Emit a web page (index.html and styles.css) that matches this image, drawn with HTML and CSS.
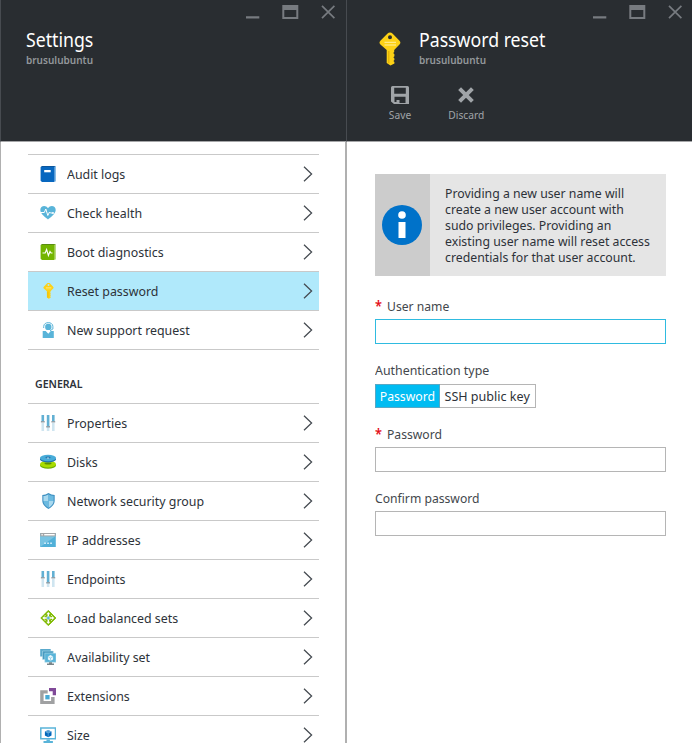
FILE: index.html
```html
<!DOCTYPE html>
<html lang="en">
<head>
<meta charset="utf-8">
<title>Password reset</title>
<link rel="stylesheet" href="styles.css">
</head>
<body>
<svg class="defs" width="0" height="0" aria-hidden="true">
  <symbol id="chevron" viewBox="0 0 10 16"><path d="M1 .8 8.6 8 1 15.2" fill="none" stroke="#444a50" stroke-width="1.25"/></symbol>
  <symbol id="window-buttons" viewBox="0 0 90 14">
    <path d="M0 11.300h13.300v2.200H0zM36.300 0h16v14h-16zm2 5v7h12V5z" fill="#777b80" fill-rule="evenodd"/>
    <path d="m76 .9 12.400 12.200m0-12.200L76 13.100" fill="none" stroke="#777b80" stroke-width="1.700"/>
  </symbol>
  <symbol id="sliders" viewBox="0 0 16 16">
    <path d="M1.500 8h2.600v8H1.500zM6.800 12h2.600v4H6.800zM12 8h2.600v8H12z" fill="#cfe5f0"/>
    <path d="M1.500 0h2.600v7H1.500zM6.800 0h2.600v11.500H6.800zM12 0h2.600v7H12z" fill="#62b0d3"/>
    <path d="M.9 6h3.800v1.500H.9zM6.200 11H10v1.500H6.200zM11.400 6h3.800v1.500h-3.800z" fill="#92a0a8"/>
  </symbol>
  <symbol id="key" viewBox="0 0 22 34">
    <path d="M11 .5c1 0 1.800.4 2.700 1.200l6.800 7c1.200 1.400 1.200 2.400 0 3.800L15.200 18v2l-1 1 1.200 1.200v2l-1 1 1 1.200v1.600l-1 1 1 1v1.500L11.500 33.500 7.700 31V18L1.400 12.500c-1.200-1.400-1.200-2.400 0-3.800l6.900-7C9.200.9 10 .5 11 .5zm0 2.800a2 2 0 1 0 0 4 2 2 0 0 0 0-4z" fill="#fcd116" fill-rule="evenodd"/>
    <path d="M5.500 10.300h11.500M5.500 13h11.500" stroke="#fff1a0" stroke-width="1"/>
    <path d="M9.800 19v12.300" stroke="#dca900" stroke-width="1"/>
  </symbol>
</svg>
<div class="portal">
  <section class="blade">
    <header class="head">
      <svg class="window-buttons" width="90" height="14"><use href="#window-buttons"/></svg>
      <div class="titles">
        <h1 class="title">Settings</h1>
        <p class="subtitle">brusulubuntu</p>
      </div>
    </header>
    <nav class="content">
      <ul class="list">
        <li class="row"><svg class="icon" viewBox="0 0 16 16"><path d="M2 0h14v15.500H2z" fill="#8bbde6"/><path d="M.6 1h13.800v15H2L.6 14.800z" fill="#0867bf"/><path d="M.6 1 2 0h13l-.5 1z" fill="#0b559c"/><path d="M4.200 4h6.500v2.300H4.200z" fill="#fff"/></svg><span class="label">Audit logs</span><svg class="chevron"><use href="#chevron"/></svg></li>
        <li class="row"><svg class="icon" viewBox="0 0 16 16"><path d="M8 14.500C6.500 12.700.3 9.300.3 4.900.3.800 5.600-.4 8 3.200 10.400-.4 15.700.8 15.700 4.900 15.700 9.300 9.500 12.700 8 14.500z" fill="#59b4d9"/><path d="M.5 7.500h3.800l1.500-3.500 2 6.500 1.700-3.500 1 1h2.700" fill="none" stroke="#fff" stroke-width="1"/><circle cx="13" cy="8" r=".9" fill="#fff"/></svg><span class="label">Check health</span><svg class="chevron"><use href="#chevron"/></svg></li>
        <li class="row"><svg class="icon" viewBox="0 0 16 16"><path d="M2 0h14v15.500H2z" fill="#bad982"/><path d="M.6 1h13.800v15H2L.6 14.800z" fill="#73b500"/><path d="M.6 1 2 0h13l-.5 1z" fill="#5a8d10"/><path d="M2.500 9h2.700l1.400-3.500 1.800 6L10 7.500l1 1.500h1.500" fill="none" stroke="#fff" stroke-width="1.100"/></svg><span class="label">Boot diagnostics</span><svg class="chevron"><use href="#chevron"/></svg></li>
        <li class="row selected"><svg class="icon" viewBox="0 0 16 16"><use href="#key" x="3" y="-.5" width="11" height="16.500"/></svg><span class="label">Reset password</span><svg class="chevron"><use href="#chevron"/></svg></li>
        <li class="row"><svg class="icon" viewBox="0 0 16 16"><path d="M2.700 9h3l2.600 2.700L10.800 9h3v7H2.700z" fill="#59b4d9"/><circle cx="8.300" cy="4.900" r="3.200" fill="#59b4d9"/><path d="M3.700 6V4.500c0-5.200 9.200-5.200 9.200 0V7L10 8.700" fill="none" stroke="#59b4d9" stroke-width="1"/></svg><span class="label">New support request</span><svg class="chevron"><use href="#chevron"/></svg></li>
      </ul>
      <h2 class="group"><span>GENERAL</span></h2>
      <ul class="list">
        <li class="row"><svg class="icon"><use href="#sliders"/></svg><span class="label">Properties</span><svg class="chevron"><use href="#chevron"/></svg></li>
        <li class="row"><svg class="icon" viewBox="0 0 16 16"><ellipse cx="8" cy="11.400" rx="8" ry="3.300" fill="#6fae00"/><ellipse cx="8" cy="10.200" rx="8" ry="3.300" fill="#a9dc00"/><ellipse cx="8" cy="9.500" rx="3.500" ry="1" fill="#5c9100"/><ellipse cx="8" cy="5.200" rx="8" ry="3.300" fill="#2172aa"/><ellipse cx="8" cy="4" rx="8" ry="3.300" fill="#48acd9"/><ellipse cx="8" cy="3.500" rx="2.600" ry="1" fill="#2172aa"/><ellipse cx="8" cy="3.900" rx="1.300" ry=".5" fill="#d7effa"/></svg><span class="label">Disks</span><svg class="chevron"><use href="#chevron"/></svg></li>
        <li class="row"><svg class="icon" viewBox="0 0 16 16"><path d="M8.500 0c2 1.300 4 1.900 6.200 2v5.500c0 4-3 6.800-6.200 8.500-3.200-1.700-6.200-4.500-6.200-8.500V2C4.500 1.900 6.500 1.300 8.500 0z" fill="#3f91c2"/><path d="M8.500 1.400v6.500H3.400V3c2-.2 3.600-.7 5.100-1.600zM8.500 7.900h5.100c-.2 3.300-2.500 5.300-5.100 6.800z" fill="#a9d9ef"/><path d="M8.500 1.400C10 2.300 11.700 2.800 13.600 3v4.900H8.500zM3.400 7.900h5.100v6.800c-2.600-1.500-4.900-3.500-5.100-6.800z" fill="#6bbae0"/></svg><span class="label">Network security group</span><svg class="chevron"><use href="#chevron"/></svg></li>
        <li class="row"><svg class="icon" viewBox="0 0 16 16"><path d="M.2 1h15.600v14H.2z" fill="#51b0d8"/><path d="M.2 4h15.600L.2 15z" fill="#78c3e2"/><path d="M.2 1h15.600v3.400H.2z" fill="#a3a6a8"/><path d="M4.200 2h10.500v1.400H4.200z" fill="#fff"/><circle cx="2.100" cy="2.700" r=".8" fill="#fff"/><path d="M4.300 10.500h1.500V12H4.300zM7.300 10.500h1.500V12H7.300zM10.300 10.500h1.500V12h-1.500z" fill="#e5f6ff"/></svg><span class="label">IP addresses</span><svg class="chevron"><use href="#chevron"/></svg></li>
        <li class="row"><svg class="icon"><use href="#sliders"/></svg><span class="label">Endpoints</span><svg class="chevron"><use href="#chevron"/></svg></li>
        <li class="row"><svg class="icon" viewBox="0 0 16 16"><path d="M8.300.4 15.800 8l-7.500 7.600L.8 8z" fill="#7fba00" stroke="#7fba00" stroke-width="1" stroke-linejoin="round"/><path d="m8.300 2 2 2.300H9v2H7.600v-2H6.300zM8.300 14l2-2.300H9v-2H7.600v2H6.300zM2.300 8l2.300-2v1.300h2v1.400h-2V10zM14.300 8 12 6v1.300h-2v1.400h2V10z" fill="#fff"/><path d="m4.800 5.200 1 1M11.800 5.200l-1 1M4.800 10.800l1-1M11.800 10.800l-1-1" stroke="#fff" stroke-width=".9"/><circle cx="8.300" cy="8" r="1.700" fill="#59b4d9" stroke="#fff" stroke-width=".5"/></svg><span class="label">Load balanced sets</span><svg class="chevron"><use href="#chevron"/></svg></li>
        <li class="row"><svg class="icon" viewBox="0 0 16 16"><path d="M.2 0h10.500v7.500H.2z" fill="#5aaacd"/><path d="M2.500 2h10.800v8.500H2.500z" fill="#489bc1" stroke="#bce0ed" stroke-width=".5"/><path d="M4.800 4.200H16v9.100H4.800z" fill="#59b4d9" stroke="#bce0ed" stroke-width=".5"/><path d="m10.500 6 2.600 1.400v3l-2.600 1.400-2.600-1.400v-3z" fill="#e9f7fc"/><path d="M7.900 7.500 10.500 9l2.600-1.500M10.500 9v2.700" fill="none" stroke="#75bfdd" stroke-width=".6"/><path d="M9 13.300h3v1.200h2V16H7v-1.500h2z" fill="#7a858a"/></svg><span class="label">Availability set</span><svg class="chevron"><use href="#chevron"/></svg></li>
        <li class="row"><svg class="icon" viewBox="0 0 16 16"><path d="M.2 2.300h7.500v3.200H3.600V13h7.500V9h3.500v7H.2z" fill="#a0a1a2"/><path d="M9 0h7v7.300h-3.300V3.200H9z" fill="#804998"/><path d="M5.300 7h4.300v4.400H5.300z" fill="#48a9d4"/></svg><span class="label">Extensions</span><svg class="chevron"><use href="#chevron"/></svg></li>
        <li class="row"><svg class="icon" viewBox="0 0 16 16"><path d="M.8 1h14.700v10.700H.8z" fill="#fff" stroke="#59b4d9" stroke-width="1.500"/><path d="M6.500 12.400h3.400v1.700h3V16H3.500v-1.900h3z" fill="#59b4d9"/><path d="m8.200 2.900 3.300 1.700v3.900l-3.300 1.800-3.300-1.800V4.600z" fill="#0067bb"/><path d="m8.200 3.300 2.700 1.400-2.700 1.500-2.700-1.500zM8.200 6.500v3.300" fill="#489bd3" stroke="#b9dcf3" stroke-width=".4"/></svg><span class="label">Size</span><svg class="chevron"><use href="#chevron"/></svg></li>
      </ul>
    </nav>
  </section>
  <section class="blade">
    <header class="head">
      <svg class="window-buttons" width="90" height="14"><use href="#window-buttons"/></svg>
      <div class="identity">
        <svg class="key" width="22" height="34"><use href="#key"/></svg>
        <div class="titles">
          <h1 class="title">Password reset</h1>
          <p class="subtitle">brusulubuntu</p>
        </div>
      </div>
      <div class="commands">
        <div class="command"><svg width="18" height="18" viewBox="0 0 18 18"><path d="M1.500 0h15Q18 0 18 1.500V18H3l-3-2.500v-14Q0 0 1.500 0zM3.200 1.700v6h11.600v-6zM3.500 10.700V16h2v-2h3v3h6v-6.300z" fill="#a0a4a8" fill-rule="evenodd"/></svg><span class="command-name">Save</span></div>
        <div class="command"><svg width="18" height="18" viewBox="0 0 18 18"><path d="m2.600 2.600 12.800 12.800m0-12.800L2.600 15.400" fill="none" stroke="#a0a4a8" stroke-width="4"/></svg><span class="command-name">Discard</span></div>
      </div>
    </header>
    <form class="form">
      <div class="notice">
        <div class="notice-icon"><svg width="40" height="40" viewBox="0 0 40 40"><circle cx="20" cy="20" r="20" fill="#0072c9"/><circle cx="20" cy="10" r="3.800" fill="#fff"/><path d="M16.500 17h7v16h-7z" fill="#fff"/></svg></div>
        <p class="notice-text">Providing a new user name will<br>create a new user account with<br>sudo privileges. Providing an<br>existing user name will reset access<br>credentials for that user account.</p>
      </div>
      <div class="field"><label for="user"><span class="required">*</span><span class="caption tight">User name</span></label><div class="box current"><input id="user" type="text"></div></div>
      <div class="field"><label><span class="caption">Authentication type</span></label>
        <div class="options"><span class="option chosen"><span class="option-name">Password</span></span><span class="option"><span class="option-name wide">SSH public key</span></span></div>
      </div>
      <div class="field"><label for="pass"><span class="required">*</span><span class="caption tight">Password</span></label><div class="box"><input id="pass" type="password"></div></div>
      <div class="field"><label for="confirm"><span class="caption tight">Confirm password</span></label><div class="box"><input id="confirm" type="password"></div></div>
    </form>
  </section>
</div>
</body>
</html>
```
FILE: styles.css
```css
* { box-sizing: border-box; }
body { margin: 0; background: #fff; color: #2d3239; font: 13px/16px "Noto Sans", "Open Sans", sans-serif; }
h1, h2, p, ul { margin: 0; padding: 0; font-weight: 400; }
ul { list-style: none; }
.defs { display: none; }
.portal { display: flex; width: 692px; height: 743px; overflow: hidden; }
.blade { width: 346px; flex: none; border-left: 1px solid #b0b0b0; border-right: 1px solid #b0b0b0; }
.blade + .blade { border-right: 0; }
.head { display: flex; flex-direction: column; height: 142px; margin: 0 -1px; padding: 5px 10px 0 25px; border-bottom: 1px solid #a5a6a8; border-left: 1px solid #474b50; background: #292d31; }
.blade + .blade .head { margin-right: 0; padding-right: 9px; }
.window-buttons { align-self: flex-end; flex: none; }
.titles { padding-top: 8px; }
.title { height: 25px; color: #fff; font-size: 20px; line-height: 26px; white-space: nowrap; transform: scaleX(.885); transform-origin: 0 50%; }
.subtitle { color: #93979b; font-size: 11px; line-height: 15px; font-weight: 600; transform: scaleX(.91); transform-origin: 0 50%; }
.identity { display: flex; gap: 18px; margin-left: 7px; }
.key { flex: none; margin-top: 13px; }
.commands { display: flex; gap: 35px; padding: 19px 0 0 16px; }
.command { display: flex; flex-direction: column; align-items: center; gap: 3px; color: #a0a4a8; font-size: 11px; line-height: 16px; white-space: nowrap; }
.command-name { transform: scaleX(.93); }
.content { padding: 12px 26px 0 27px; }
.list { border-top: 1px solid #c9c9c9; }
.row { display: flex; align-items: center; height: 39px; padding: 0 6px 1px 12px; border-bottom: 1px solid #c9c9c9; white-space: nowrap; }
.row.selected { background: #b0e9fb; }
.icon { width: 16px; height: 16px; margin-right: 11px; flex: none; }
.label { transform: scaleX(.952); transform-origin: 0 50%; }
.chevron { width: 10px; height: 16px; margin-left: auto; flex: none; }
.group { height: 53px; padding: 26px 0 0 7px; font-size: 11px; font-weight: 600; line-height: 16px; }
.group span { display: inline-block; transform: scaleX(.96); transform-origin: 0 50%; }
.form { padding: 32px 27px 0 28px; }
.notice { display: flex; width: 291px; height: 102px; background: #e5e5e5; }
.notice-icon { display: flex; align-items: center; justify-content: center; flex: none; width: 55px; padding-right: 2px; background: #ccc; }
.notice-text { margin: 11px 0 0 15px; white-space: nowrap; transform: scaleX(.945); transform-origin: 0 50%; align-self: flex-start; }
.field { height: 64px; }
.notice + .field { margin-top: 21px; }
.field label { display: flex; align-items: center; height: 18px; color: #43474c; white-space: nowrap; }
.required { width: 12px; margin-top: -3px; color: #e30a17; font-size: 15px; font-weight: 600; line-height: 18px; transform: scaleX(.85); transform-origin: 0 50%; }
.caption { transform: scaleX(.952); transform-origin: 0 50%; }
.caption.tight { transform: scaleX(.935); }
.box { width: 291px; height: 25px; margin-top: 4px; border: 1px solid #b5b5b5; }
.box.current { border-color: #2fbbe0; }
input { display: block; width: 100%; height: 23px; padding: 0 5px; border: 0; background: #fff; outline: 0; font: inherit; }
.options { display: flex; width: 161px; height: 24px; margin-top: 5px; border: 1px solid #b5b5b5; }
.option { display: flex; align-items: center; justify-content: center; flex: 1; white-space: nowrap; }
.option.chosen { flex: 0 0 65px; margin: -1px 0 -1px -1px; border: 1px solid #57a8c5; background: #00bcf2; color: #fff; }
.option-name { transform: scaleX(.94); }
.option-name.wide { transform: scaleX(.966); }
```
